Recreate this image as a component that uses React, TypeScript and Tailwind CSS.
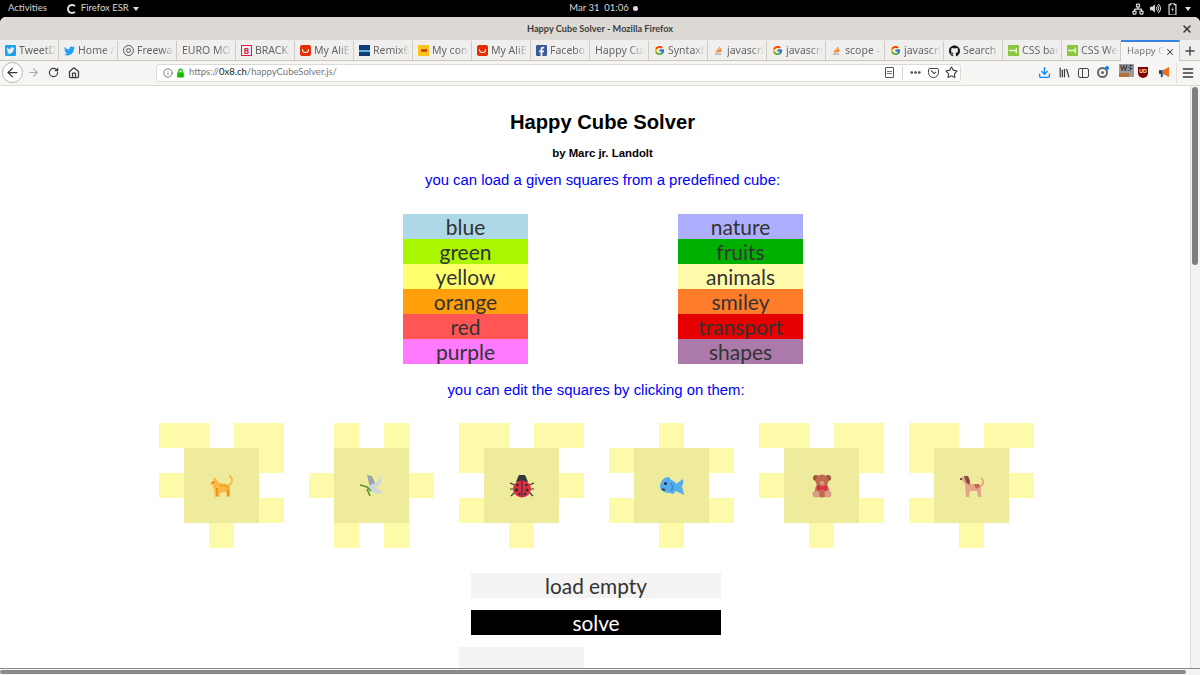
import { ReactNode } from "react";
import { FaFacebookSquare, FaGithub, FaTwitter, FaTwitterSquare, FaVolumeUp } from "react-icons/fa";
import { FcGoogle } from "react-icons/fc";
import {
  ArrowLeft,
  ArrowRight,
  Download,
  Ellipsis,
  Home,
  Info,
  Library,
  Menu,
  Network,
  Plus,
  RotateCw,
  Star,
  X,
} from "lucide-react";

const So = () => (
  <svg viewBox="0 0 12 12" className="w-[11px] h-[11px]">
    <path d="M2 9h7v2H2z" fill="#bcbbbb" />
    <path d="M3 8l5-1M3.500 6l5 1M5 4l4 3M7 2l2 5" stroke="#f48024" strokeWidth="1.100" />
  </svg>
);

const Ali = () => (
  <span className="w-[11px] h-[11px] rounded-[2px] bg-[#e62e04] flex items-center justify-center">
    <span className="w-[7px] h-[4px] border-b border-x border-white rounded-b-[4px]" />
  </span>
);

const W3 = () => (
  <svg viewBox="0 0 12 12" className="w-[11px] h-[11px]">
    <rect width="12" height="12" fill="#8cc63f" />
    <path d="M1 6c1.500-2 2.500 2 4 0s2.500 2 4 0M9 3v6" stroke="#fff" strokeWidth="1.200" fill="none" />
  </svg>
);

const tabs: { label: string; icon?: ReactNode }[] = [
  { label: "TweetD", icon: <FaTwitterSquare className="text-[#1da1f2] text-[13px]" /> },
  { label: "Home /", icon: <FaTwitter className="text-[#1da1f2] text-[12px]" /> },
  {
    label: "Freewa",
    icon: (
      <span className="w-[11px] h-[11px] rounded-full border border-[#555] flex items-center justify-center">
        <span className="w-[5px] h-[5px] rounded-full border border-[#555]" />
      </span>
    ),
  },
  { label: "EURO MO" },
  {
    label: "BRACK",
    icon: (
      <span className="w-[11px] h-[11px] border border-[#e8174f] text-[#e8174f] text-[8px] leading-[9px] font-bold text-center">
        B
      </span>
    ),
  },
  { label: "My AliE", icon: <Ali /> },
  {
    label: "Remix6",
    icon: (
      <span className="w-[11px] h-[11px] bg-[#123a7c] flex items-center">
        <span className="w-full h-[2px] bg-[#5fb7d0]" />
      </span>
    ),
  },
  {
    label: "My con",
    icon: (
      <span className="w-[11px] h-[11px] bg-[#fcc419] flex items-center justify-center">
        <span className="w-[6px] h-[3px] bg-[#d9480f]" />
      </span>
    ),
  },
  { label: "My AliE", icon: <Ali /> },
  { label: "Facebo", icon: <FaFacebookSquare className="text-[#3b5998] text-[13px]" /> },
  { label: "Happy Cub" },
  { label: "SyntaxE", icon: <FcGoogle className="text-[11px]" /> },
  { label: "javascri", icon: <So /> },
  { label: "javascri", icon: <FcGoogle className="text-[11px]" /> },
  { label: "scope -", icon: <So /> },
  { label: "javascri", icon: <FcGoogle className="text-[11px]" /> },
  { label: "Search", icon: <FaGithub className="text-[#111] text-[12px]" /> },
  { label: "CSS bac", icon: <W3 /> },
  { label: "CSS We", icon: <W3 /> },
];

const leftList = [
  { name: "blue", bg: "bg-[#add8e6]" },
  { name: "green", bg: "bg-[#aaf500]" },
  { name: "yellow", bg: "bg-[#ffff6e]" },
  { name: "orange", bg: "bg-[#ff9f0a]" },
  { name: "red", bg: "bg-[#ff5555]" },
  { name: "purple", bg: "bg-[#ff7aff]" },
];

const rightList = [
  { name: "nature", bg: "bg-[#aeaeff]" },
  { name: "fruits", bg: "bg-[#00b000]" },
  { name: "animals", bg: "bg-[#fdfbaa]" },
  { name: "smiley", bg: "bg-[#ff7c2a]" },
  { name: "transport", bg: "bg-[#e60000]" },
  { name: "shapes", bg: "bg-[#ac79ab]" },
];

const Cat = () => (
  <svg viewBox="0 0 24 24" className="w-[24px] h-[24px]">
    <path d="M0 9l3-2 1-4 3 3 2 3 7 1 4 1v12h-3l-1-5-6 1-1 4H5l-1-8-2-4z" fill="#fdb83f" />
    <path d="M19 11c3-1 4-5 2-8-.5-1-1.500-1-2-1" fill="none" stroke="#fdb83f" strokeWidth="1.800" />
    <path d="M11 10v3M14 10v3M17 11v3" stroke="#ee8a1d" strokeWidth="1" />
    <path d="M7 14v8M18 15v7" stroke="#ee8a1d" strokeWidth="1.600" />
    <circle cx="3" cy="8.500" r=".8" fill="#c0392b" />
  </svg>
);

const Dove = () => (
  <svg viewBox="0 0 24 24" className="w-[24px] h-[24px]">
    <path d="M7 1l5 1 4 9-6 3z" fill="#9ba5ad" />
    <path d="M21 1c2 6-1 11-6 13l8 4-6 2-6-3-3-4 4-3 4-1c2-2 4-5 5-8z" fill="#ccd6dd" />
    <path d="M0 11l7 2 4 4M7 15l3 7" stroke="#5c913b" strokeWidth="1.600" fill="none" />
  </svg>
);

const Ladybug = () => (
  <svg viewBox="0 0 24 24" className="w-[24px] h-[24px]">
    <path d="M0 9l5 2M0 15h5M1 22l4-4M24 9l-5 2M24 15h-5M23 22l-4-4" stroke="#31373d" strokeWidth="1.200" />
    <path d="M6 8l3-7h6l3 7z" fill="#31373d" />
    <ellipse cx="12" cy="15" rx="9" ry="8.500" fill="#dd2e44" />
    <path d="M12 7v16" stroke="#292f33" strokeWidth="1" />
    <g fill="#292f33">
      <circle cx="7.500" cy="11" r="1.300" />
      <circle cx="16.500" cy="11" r="1.300" />
      <circle cx="6.500" cy="16" r="1.800" />
      <circle cx="17" cy="16" r="1.500" />
      <circle cx="9.500" cy="20" r="1.200" />
      <circle cx="15" cy="20" r="1.200" />
    </g>
  </svg>
);

const Fish = () => (
  <svg viewBox="0 0 24 24" className="w-[24px] h-[24px]">
    <path d="M0 13C0 7 4 3 9 3l1 2 5 3 1 2 7-5c1 5-1 7-1 8 0 1 2 5 2 8l-8-4-3 3-3-1c-6 0-10-3-10-6z" fill="#55acee" />
    <circle cx="5.500" cy="9.500" r="1.500" fill="#292f33" />
    <path d="M2 15l3 1" stroke="#292f33" strokeWidth="1.400" />
    <path d="M11 9c2 3 2 6 0 8" stroke="#3b88c3" strokeWidth="1.200" fill="none" />
  </svg>
);

const Teddy = () => (
  <svg viewBox="0 0 24 24" className="w-[24px] h-[24px]">
    <circle cx="6" cy="4" r="3" fill="#a0523a" />
    <circle cx="18" cy="4" r="3" fill="#a0523a" />
    <ellipse cx="12" cy="16" rx="7" ry="7.500" fill="#c1694f" />
    <circle cx="12" cy="7" r="6.500" fill="#c1694f" />
    <circle cx="6" cy="20" r="3.500" fill="#d99e82" />
    <circle cx="18" cy="20" r="3.500" fill="#d99e82" />
    <ellipse cx="12" cy="9" rx="2.500" ry="2" fill="#d99e82" />
    <path d="M7 11l5 2 5-2v6l-5-2-5 2z" fill="#dd2e44" />
  </svg>
);

const Dog = () => (
  <svg viewBox="0 0 24 24" className="w-[24px] h-[24px]">
    <path d="M0 5l4-3h4l2 5 1 3 7 0 3 2 0 11h-3l-1-6-7 0-1 6H6L5 10 3 7z" fill="#e4a58c" />
    <path d="M20 12c4-1 4-6 1-8" fill="none" stroke="#e4a58c" strokeWidth="1.800" />
    <path d="M4 2h4l2 5-1 4-3-3z" fill="#8a4b38" />
    <path d="M14 10h5l1 3-4 2z" fill="#c1694f" />
    <circle cx="1" cy="5" r="1" fill="#292f33" />
  </svg>
);

const pieces: { rows: string[]; emoji: ReactNode }[] = [
  { rows: ["xx.xx", ".ooox", "xooo.", ".ooox", "..x.."], emoji: <Cat /> },
  { rows: [".x.x.", ".ooo.", "xooox", ".ooo.", ".x.x."], emoji: <Dove /> },
  { rows: ["xx.xx", "xooo.", ".ooox", "xooo.", "..x.."], emoji: <Ladybug /> },
  { rows: ["..x..", "xooox", ".ooo.", "xooox", "..x.."], emoji: <Fish /> },
  { rows: ["xx.xx", ".ooox", "xooo.", ".ooox", "..x.."], emoji: <Teddy /> },
  { rows: ["xx.xx", "xooo.", ".ooox", "xooo.", "..x.."], emoji: <Dog /> },
];

const Piece = ({ rows, emoji }: { rows: string[]; emoji: ReactNode }) => (
  <div className="grid grid-cols-[repeat(5,25px)] grid-rows-[repeat(5,25px)]">
    {rows.join("").split("").map((c, i) => (
      <div
        key={i}
        className={
          "flex items-center justify-center " +
          (c === "x" ? "bg-[#fdfbaa]" : c === "o" ? "bg-[#eeeb9d]" : "")
        }
      >
        {i === 12 && emoji}
      </div>
    ))}
  </div>
);

const ColorList = ({ items }: { items: { name: string; bg: string }[] }) => (
  <div className="w-[125px]">
    {items.map((it) => (
      <div
        key={it.name}
        className={`h-[25px] leading-[25px] text-center text-[21px] text-[#333] ${it.bg}`}
      >
        {it.name}
      </div>
    ))}
  </div>
);

const App = () => {
  return (
    <div className="w-[1200px] h-[675px] overflow-hidden flex flex-col bg-black font-['Lato',sans-serif]">
      {/* gnome top bar */}
      <div className="h-[17px] shrink-0 grid grid-cols-[1fr_auto_1fr] items-center text-[9.500px] text-[#d8d8d8] pl-2 pr-[9px]">
        <div className="flex items-center">
          <span>Activities</span>
          <span className="ml-[20px] w-[10px] h-[10px] rounded-full border-[2px] border-[#ddd] border-r-transparent" />
          <span className="ml-[4px]">Firefox ESR</span>
          <span className="ml-[4px] w-0 h-0 border-x-[3px] border-x-transparent border-t-[4px] border-t-[#ddd]" />
        </div>
        <div className="flex items-center gap-[4px] pl-[8px]">
          <span>Mar 31&nbsp; 01:06</span>
          <span className="w-[5px] h-[5px] rounded-full bg-[#ddd]" />
        </div>
        <div className="flex items-center justify-end text-[#ddd]">
          <Network size={12} strokeWidth={2.500} />
          <FaVolumeUp className="ml-[6px] text-[11px]" />
          <svg viewBox="0 0 10 14" className="ml-[7px] w-[9px] h-[12px]">
            <path d="M3 0h4v2h2v12H1V2h2z" fill="none" stroke="#ddd" strokeWidth="1.400" />
            <path d="M5.500 4L3.500 8h1.500l-.5 3 2-4H5z" fill="#ddd" />
          </svg>
          <span className="ml-[8px] w-0 h-0 border-x-[3px] border-x-transparent border-t-[4px] border-t-[#ddd]" />
        </div>
      </div>

      {/* window */}
      <div className="flex-1 flex flex-col min-h-0 rounded-t-[6px] overflow-hidden bg-white">
        <div className="h-[23px] shrink-0 bg-[#dcd9d5] flex items-center pl-[19px] pr-[7px]">
          <div className="flex-1 text-center text-[9.200px] font-bold text-[#3d3d3d]">
            Happy Cube Solver - Mozilla Firefox
          </div>
          <X size={12} strokeWidth={3} className="text-[#333]" />
        </div>

        {/* tabs */}
        <div className="h-[21px] shrink-0 bg-[#f0efed] border-b border-[#c9c6c2] flex items-stretch pt-px text-[#666] font-['Noto_Sans',sans-serif]">
          {tabs.map((t, i) => (
            <div key={i} className="w-[59px] shrink-0 flex items-center border-r border-[#cfccc8] pl-[5px] overflow-hidden">
              {t.icon && <span className="w-[11px] mr-[3px] shrink-0 flex items-center justify-center">{t.icon}</span>}
              <span className="whitespace-nowrap [mask-image:linear-gradient(to_right,black_65%,transparent_95%)] text-[10.500px] w-full overflow-hidden">
                {t.label}
              </span>
            </div>
          ))}
          <div className="w-[59px] -mt-px -mb-px shrink-0 flex items-center bg-[#f6f5f4] border-t-2 border-t-[#3584e4] border-r border-[#cfccc8] pl-[6px] text-[#777]">
            <span className="w-[38px] whitespace-nowrap text-[9.500px] [mask-image:linear-gradient(to_right,black_70%,transparent)]">Happy C</span>
            <X size={10} strokeWidth={2.500} className="text-[#444]" />
          </div>
          <div className="flex-1 flex items-center justify-center text-[#444]">
            <Plus size={14} strokeWidth={2.500} />
          </div>
        </div>

        {/* nav bar */}
        <div className="h-[25px] shrink-0 pb-px bg-[#f6f5f4] border-b border-[#dedbd7] flex items-center text-[#3a3a3a]">
          <div className="ml-[2px] w-[21px] h-[21px] rounded-full border border-[#b5b2ae] bg-white flex items-center justify-center">
            <ArrowLeft size={15} strokeWidth={2} />
          </div>
          <ArrowRight size={13} className="ml-[4px] text-[#aaa]" />
          <RotateCw size={11} strokeWidth={2.500} className="ml-[8px]" />
          <Home size={12} strokeWidth={2.500} className="ml-[9px]" />

          <div className="ml-[76px] w-[805px] h-[18px] bg-white border border-[#dcdad6] rounded-[3px] flex items-center pl-[6px] pr-[2px] text-[9.500px]">
            <Info size={10} className="text-[#666]" />
            <svg viewBox="0 0 10 12" className="ml-[3px] w-[9px] h-[10px]">
              <path d="M3 5V3.500a2 2 0 0 1 4 0V5" fill="none" stroke="#12bc00" strokeWidth="1.600" />
              <rect x="1" y="5" width="8" height="6.500" rx="1" fill="#12bc00" />
            </svg>
            <span className="ml-[4px] text-[#777]">
              https://<span className="text-[#222]">0x8.ch</span>/happyCubeSolver.js/
            </span>
            <span className="ml-auto w-[9px] h-[11px] border border-[#555] rounded-[1px] flex flex-col justify-center gap-px pl-px">
              <span className="w-[5px] h-px bg-[#777]" />
              <span className="w-[5px] h-px bg-[#777]" />
            </span>
            <span className="ml-[8px] h-[14px] w-px bg-[#d5d3cf]" />
            <Ellipsis size={13} strokeWidth={3} className="ml-[6px]" />
            <span className="ml-[6px] w-[11px] h-[10px] border-[1.500px] border-[#444] rounded-b-[6px] rounded-t-[2px] flex items-center justify-center">
              <span className="w-[5px] h-[3px] border-b border-r border-[#444] rotate-45 -mt-[2px]" />
            </span>
            <Star size={13} strokeWidth={2} className="ml-[6px]" />
          </div>

          <Download size={13} strokeWidth={2.500} className="ml-[77px] text-[#0a84ff]" />
          <Library size={13} strokeWidth={2.200} className="ml-[7px]" />
          <span className="ml-[7px] w-[11px] h-[10px] border-[1.500px] border-[#444] rounded-[2px] flex">
            <span className="w-[4px] border-r border-[#444]" />
          </span>
          <span className="relative ml-[8px] w-[11px] h-[11px] rounded-full border-[2px] border-[#666] flex items-center justify-center">
            <span className="w-[3px] h-[3px] rounded-full bg-[#666]" />
            <span className="absolute -top-[3px] -right-[3px] w-[4px] h-[4px] rounded-full bg-[#0a84ff]" />
          </span>
          <span className="ml-[11px] -mt-[4px] w-[15px] h-[13px] bg-[#9c9a98] text-[7px] leading-[9px] font-bold text-center text-[#333] rounded-[1px]">
            W:F
            <span className="block h-[4px] w-[10px] bg-[#b4703a]" />
          </span>
          <span className="ml-[4px] w-[10px] h-[11px] bg-[#800000] rounded-b-[5px] text-[5px] leading-[9px] text-center font-bold text-white">
            UD
          </span>
          <svg viewBox="0 0 14 12" className="ml-[10px] w-[13px] h-[11px]">
            <path d="M5 3.500L12 0v11L5 7.500z" fill="#f0701e" />
            <rect x="1" y="3.500" width="4" height="4" fill="#1c3f6e" />
            <rect x="3" y="7.500" width="2" height="3.500" fill="#1c3f6e" />
          </svg>
          <span className="ml-[5px] h-[20px] w-px bg-[#e2dfdb]" />
          <Menu size={14} strokeWidth={2.500} className="ml-[4px]" />
        </div>

        {/* page */}
        <div className="flex-1 min-h-0 flex">
          <div className="w-[1190px] shrink-0 overflow-hidden font-['Liberation_Sans',sans-serif]">
            <h1 className="mt-[22px] pl-[15px] text-center text-[20.200px] leading-[28px] font-bold text-black">
              Happy Cube Solver
            </h1>
            <p className="mt-[9px] pl-[15px] text-center text-[11.400px] leading-[16px] font-bold text-black">
              by Marc jr. Landolt
            </p>
            <p className="mt-[9px] pl-[15px] text-center text-[14.900px] leading-[20px] text-[#0000ff]">
              you can load a given squares from a predefined cube:
            </p>
            <div className="mt-[24px] ml-[403px] flex gap-[150px] font-['Lato',sans-serif]">
              <ColorList items={leftList} />
              <ColorList items={rightList} />
            </div>
            <p className="mt-[16px] pl-[2px] text-center text-[14.900px] leading-[20px] text-[#0000ff]">
              you can edit the squares by clicking on them:
            </p>
            <div className="mt-[23px] ml-[159px] flex gap-[25px]">
              {pieces.map((p, i) => (
                <Piece key={i} rows={p.rows} emoji={p.emoji} />
              ))}
            </div>
            <div className="mt-[25px] ml-[471px] w-[250px] flex flex-col gap-[12px] text-[20.800px] text-center font-['Lato',sans-serif]">
              <div className="h-[25px] leading-[25px] bg-[#f4f3f2] text-[#333]">load empty</div>
              <div className="h-[25px] leading-[25px] bg-black text-white">solve</div>
            </div>
            <div className="mt-[12px] ml-[459px] w-[125px] h-[25px] bg-[#f4f3f2]" />
          </div>

          {/* vertical scrollbar */}
          <div className="w-[10px] bg-[#f4f3f2] border-l border-[#e2dfdb] pl-[1px] pt-[1px]">
            <div className="w-[6px] h-[178px] rounded-[3px] bg-[#7d7f7f]" />
          </div>
        </div>

        {/* horizontal scrollbar */}
        <div className="h-[7px] shrink-0 bg-[#f4f3f2] border-t border-[#8a8a8a] pt-px">
          <div className="h-[4px] w-[1186px] rounded-[2px] bg-[#8a8c8c]" />
        </div>
      </div>
    </div>
  );
};

export default App;
